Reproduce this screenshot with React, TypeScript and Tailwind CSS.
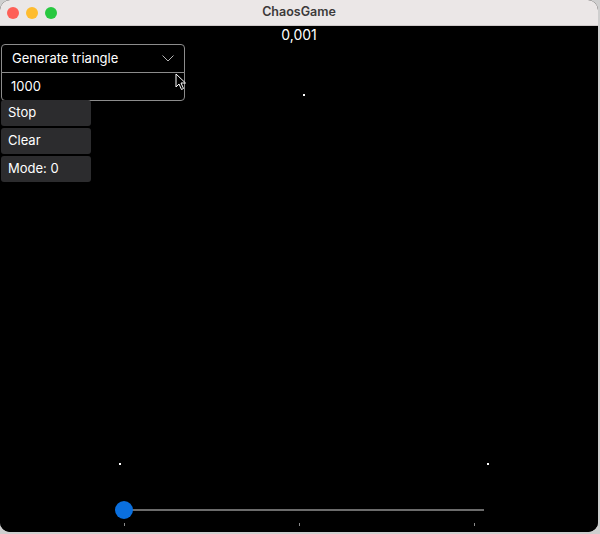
import React from 'react';

const Dot: React.FC<{ x: number; y: number }> = ({ x, y }) => (
  <div className="absolute w-[2px] h-[2px] bg-white" style={{ left: x, top: y }} />
);

const Cursor: React.FC = () => (
  <svg className="absolute left-[175px] top-[47px]" width="12" height="18" viewBox="0 0 12 18">
    <path d="M1 1 L1 14 L4 11 L6.5 16.5 L8.5 15.5 L6 10 L10.5 10 Z" fill="black" stroke="white" strokeWidth="1" strokeLinejoin="round" />
  </svg>
);

const App: React.FC = () => {
  return (
    <div className="w-[600px] h-[534px] bg-[#cfcfcf]" style={{ fontFamily: 'Inter, "Noto Sans", sans-serif' }}>
      <div className="w-[598px] h-[532px] rounded-[10px] overflow-hidden flex flex-col bg-black">
        {/* title bar */}
        <div className="h-[26px] shrink-0 bg-[#ebe7e7] border-b border-[#cfcaca] flex items-center relative">
          <div className="flex gap-[7px] pl-[7px]">
            <span className="w-[12px] h-[12px] rounded-full bg-[#fe5f57]" />
            <span className="w-[12px] h-[12px] rounded-full bg-[#febc2e]" />
            <span className="w-[12px] h-[12px] rounded-full bg-[#28c840]" />
          </div>
          <div className="absolute inset-0 flex items-center justify-center text-[12.5px] font-semibold text-[#3c3a3a]">
            ChaosGame
          </div>
        </div>

        {/* canvas */}
        <div className="relative flex-1 bg-black text-white">
          <div className="h-[17px] flex items-center justify-center text-[14px] leading-none">0,001</div>

          <div className="mt-[1px] flex flex-col items-start">
            <div className="w-[184px] h-[29px] ml-[1px] border border-[#8c8c8c] rounded-t-[4px] flex items-center justify-between pl-[10px] pr-[9px] text-[13px]">
              <span>Generate triangle</span>
              <svg width="12" height="7" viewBox="0 0 12 7" className="mr-[1px]">
                <path d="M0.5 0.5 L6 6 L11.5 0.5" fill="none" stroke="#b5b5b5" strokeWidth="1" />
              </svg>
            </div>
            <div className="w-[184px] h-[29px] ml-[1px] -mt-[1px] border border-[#8c8c8c] rounded-b-[4px] flex items-center pl-[9px] text-[13px]">
              1000
            </div>
            <div className="flex flex-col gap-[2px] ml-[1px] -mt-[1px]">
              <div className="w-[90px] h-[26px] rounded-[3px] bg-[#2c2c2e] flex items-center pl-[7px] text-[13px]">Stop</div>
              <div className="w-[90px] h-[26px] rounded-[3px] bg-[#2c2c2e] flex items-center pl-[7px] text-[13px]">Clear</div>
              <div className="w-[90px] h-[26px] rounded-[3px] bg-[#2c2c2e] flex items-center pl-[7px] text-[13px]">Mode: 0</div>
            </div>
          </div>

          <Cursor />

          <Dot x={303} y={68} />
          <Dot x={119} y={437} />
          <Dot x={487} y={437} />

          {/* slider */}
          <div className="absolute left-[115px] top-[475px] w-[370px] h-[26px]">
            <div className="absolute left-[9px] right-[1px] top-[8px] h-[2px] bg-[#6b6b6b]" />
            <div className="absolute left-0 top-0 w-[18px] h-[18px] rounded-full bg-[#0a6fde]" />
            <div className="absolute left-[9px] top-[22px] w-[1px] h-[3px] bg-[#8a8a8a]" />
            <div className="absolute left-[184px] top-[22px] w-[1px] h-[3px] bg-[#8a8a8a]" />
            <div className="absolute left-[359px] top-[22px] w-[1px] h-[3px] bg-[#8a8a8a]" />
          </div>
        </div>
      </div>
    </div>
  );
};

export default App;
